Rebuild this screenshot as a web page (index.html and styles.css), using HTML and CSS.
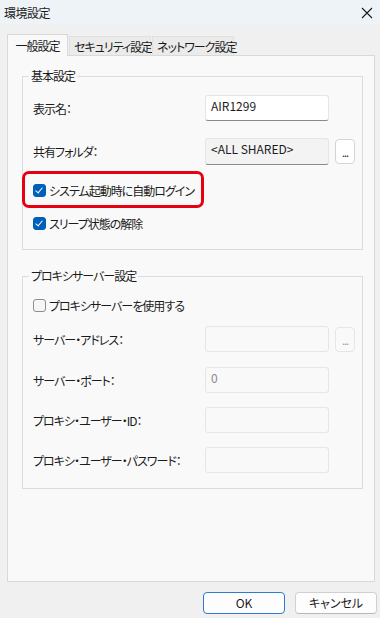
FILE: index.html
```html
<!DOCTYPE html>
<html>
  <head>
    <meta charset="UTF-8" />
    <title>環境設定</title>
    <link rel="stylesheet" href="styles.css">
  </head>
  <body>
    <div class="window">
      <div class="titlebar">
        <span class="title">環境設定</span>
        <svg class="close" width="12" height="12" viewBox="0 0 12 12">
          <path d="M1 1 L11 11 M11 1 L1 11" stroke="#1a1a1a" stroke-width="1.1" fill="none"/>
        </svg>
      </div>

      <div class="tabs">
        <div class="tab active">一般設定</div>
        <div class="tab">セキュリティ設定</div>
        <div class="tab">ネットワーク設定</div>
      </div>

      <div class="panel">
        <fieldset class="group basic">
          <legend>基本設定</legend>
          <div class="row first">
            <span class="label">表示名：</span>
            <div class="field">AIR1299</div>
          </div>
          <div class="row gap-17">
            <span class="label">共有フォルダ：</span>
            <div class="field readonly">&lt;ALL SHARED&gt;</div>
            <div class="browse">...</div>
          </div>
          <div class="highlight">
            <label class="check"><span class="box checked"></span>システム起動時に自動ログイン</label>
          </div>
          <div class="check-row">
            <label class="check"><span class="box checked"></span>スリープ状態の解除</label>
          </div>
        </fieldset>

        <fieldset class="group proxy">
          <legend>プロキシサーバー設定</legend>
          <div class="check-row first">
            <label class="check"><span class="box"></span>プロキシサーバーを使用する</label>
          </div>
          <div class="row gap-13">
            <span class="label">サーバー・アドレス：</span>
            <div class="field disabled"></div>
            <div class="browse disabled">...</div>
          </div>
          <div class="row gap-15">
            <span class="label">サーバー・ポート：</span>
            <div class="field disabled"><span class="muted">0</span></div>
          </div>
          <div class="row gap-14">
            <span class="label">プロキシ・ユーザー・ID：</span>
            <div class="field disabled"></div>
          </div>
          <div class="row gap-14">
            <span class="label">プロキシ・ユーザー・パスワード：</span>
            <div class="field disabled"></div>
          </div>
        </fieldset>
      </div>

      <div class="buttons">
        <div class="btn default">OK</div>
        <div class="btn">キャンセル</div>
      </div>
    </div>
  </body>
</html>
```

FILE: styles.css
```css
body {
  margin: 0;
  background: #f0f0f0;
  font-family: "Noto Sans CJK JP", "Noto Sans", sans-serif;
  font-feature-settings: "palt";
  font-size: 12px;
  letter-spacing: -1px;
  color: #1b1b1b;
}

.window {
  width: 380px;
  height: 618px;
  overflow: hidden;
}

.titlebar {
  height: 25px;
  background: #eef3f8;
  display: flex;
  align-items: center;
  justify-content: space-between;
  padding: 0 7px 0 4px;
}

.title {
  font-size: 12px;
  line-height: 16px;
  letter-spacing: -0.5px;
}

.close {
  display: block;
}

.tabs {
  display: flex;
  align-items: flex-end;
  margin-top: 8px;
  padding-left: 7px;
  height: 22px;
}

.tab {
  height: 19px;
  line-height: 19px;
  padding: 0 4px;
  background: #ebebeb;
  border: 1px solid #e0e0e0;
  border-bottom: none;
  box-sizing: border-box;
  margin-right: 1px;
  text-align: center;
  white-space: nowrap;
}

.tab.active {
  height: 22px;
  line-height: 21px;
  width: 61px;
  background: #f9f9f9;
  border-color: #d9d9d9;
  position: relative;
  top: 1px;
}

.tab:nth-child(2) {
  width: 82px;
}

.tab:nth-child(3) {
  width: 82px;
}

.panel {
  width: 368px;
  height: 527px;
  margin-left: 7px;
  box-sizing: border-box;
  background: #f9f9f9;
  border: 1px solid #d9d9d9;
  padding: 12px 0 0 14px;
}

.group {
  width: 341px;
  box-sizing: border-box;
  margin: 0;
  border: 1px solid #dcdcdc;
  padding: 0 0 0 10px;
}

.group legend {
  padding: 0 2px;
  margin-left: -4px;
  line-height: 16px;
}

.basic {
  padding-bottom: 18px;
}

.proxy {
  margin-top: 18px;
  padding-bottom: 15px;
}

.row {
  display: flex;
  align-items: center;
  height: 26px;
}

.basic .row.first {
  margin-top: 11px;
}

.gap-13 { margin-top: 13px; }
.gap-14 { margin-top: 14px; }
.gap-15 { margin-top: 15px; }
.gap-17 { margin-top: 17px; }

.label {
  width: 172px;
  white-space: nowrap;
}

.field {
  width: 124px;
  height: 26px;
  box-sizing: border-box;
  background: #ffffff;
  border: 1px solid #e5e5e5;
  border-bottom: 1px solid #8a8a8a;
  border-radius: 3px;
  padding: 2px 5px;
  line-height: 16px;
  font-size: 12px;
  letter-spacing: 0;
}

.field.readonly {
  background: #f3f3f3;
  height: 27px;
}

.field.disabled {
  background: #f9f9f9;
  border: 1px solid #e6e6e6;
}

.muted {
  color: #8a8a8a;
}

.browse {
  width: 20px;
  height: 25px;
  box-sizing: border-box;
  margin-left: 6px;
  background: #ffffff;
  border: 1px solid #d4d4d4;
  border-radius: 4px;
  text-align: center;
  line-height: 24px;
  font-size: 11px;
  letter-spacing: -1px;
}

.browse.disabled {
  background: #f9f9f9;
  border-color: #e6e6e6;
  color: #9a9a9a;
}

.highlight {
  width: 182px;
  height: 37px;
  box-sizing: border-box;
  margin: 7px 0 0 -11px;
  border: 3px solid #e60012;
  border-radius: 7px;
  padding: 2px 0 0 8px;
  display: flex;
  align-items: center;
}

.check-row {
  margin-top: 7px;
  height: 16px;
  display: flex;
  align-items: center;
}

.proxy .check-row.first {
  margin-top: 13px;
}

.check {
  display: flex;
  align-items: center;
  white-space: nowrap;
}

.box {
  width: 13px;
  height: 13px;
  box-sizing: border-box;
  border: 1px solid #8d8d8d;
  border-radius: 3px;
  background: #f6f6f6;
  margin-right: 3px;
  position: relative;
}

.box.checked {
  background: #005fb8;
  border-color: #005fb8;
}

.box.checked::after {
  content: "";
  position: absolute;
  left: 3px;
  top: 1px;
  width: 3px;
  height: 6px;
  border: solid #ffffff;
  border-width: 0 1.3px 1.3px 0;
  transform: rotate(40deg);
}

.buttons {
  display: flex;
  justify-content: flex-end;
  padding: 10px 3px 0 0;
}

.btn {
  width: 82px;
  height: 22px;
  box-sizing: border-box;
  margin-left: 10px;
  background: #fdfdfd;
  border: 1px solid #d0d0d0;
  border-bottom-color: #b8b8b8;
  border-radius: 4px;
  text-align: center;
  line-height: 20px;
  letter-spacing: 0;
}

.btn.default {
  border: 1px solid #2d7bd0;
}
```
